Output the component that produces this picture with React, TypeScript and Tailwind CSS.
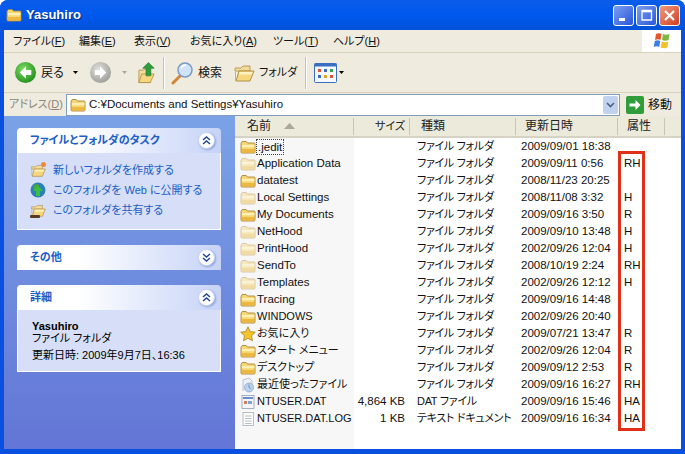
import React from 'react';

const font = 'font-["Liberation_Sans","Noto_Sans_CJK_JP",sans-serif] [font-feature-settings:"palt"]';

const Key: React.FC<{ label: string; k: string; className?: string }> = ({ label, k, className = '' }) => (
  <span className={`whitespace-nowrap ${className}`}>
    {label}(<span className="underline">{k}</span>)
  </span>
);

const Folder: React.FC<{ faded?: boolean; className?: string }> = ({ faded, className = 'w-[16px] h-[14px]' }) => (
  <svg viewBox="0 0 16 14" className={`shrink-0 ${className} ${faded ? 'opacity-45' : ''}`}>
    <path d="M1 3.500 2.200 1.500h4L7.500 3H14a1 1 0 0 1 1 1v8a1 1 0 0 1-1 1H2a1 1 0 0 1-1-1z" fill="#f7d774" stroke="#a9853a" strokeWidth="0.9" />
    <path d="M2 5h12.500v2.200H2z" fill="#fdf0b5" />
    <path d="M2 9h12.500v3.400H2z" fill="#ecb83f" />
  </svg>
);

const OpenFolder: React.FC<{ className?: string }> = ({ className = 'w-[22px] h-[20px]' }) => (
  <svg viewBox="0 0 22 20" className={`shrink-0 ${className}`}>
    <path d="M2 5h6l2-2h7v5H2z" fill="#f3dc9b" stroke="#a98a42" strokeWidth="0.8" />
    <path d="M2 5h1v13l-1-1z" fill="#d8b565" />
    <path d="M3 18 6 8h15l-4 10z" fill="#f6d77f" stroke="#a98a42" strokeWidth="0.9" />
    <path d="M6.600 9h13l-1 2.500H6z" fill="#fdf2c2" />
  </svg>
);

const Chevrons: React.FC<{ down?: boolean }> = ({ down }) => (
  <div className="w-[17px] h-[17px] rounded-full bg-white border border-[#c6d3f7] shadow-[1px_1px_2px_#8b9fd8] flex items-center justify-center">
    <svg viewBox="0 0 9 9" className="w-[9px] h-[9px]">
      <path
        d={down ? 'M1 1l3.500 3L8 1M1 5l3.500 3L8 5' : 'M1 4l3.500-3L8 4M1 8l3.500-3L8 8'}
        fill="none"
        stroke="#1c4596"
        strokeWidth="1.400"
      />
    </svg>
  </div>
);

const CardHeader: React.FC<{ title: string; down?: boolean }> = ({ title, down }) => (
  <div className="h-[25px] rounded-t-[4px] bg-gradient-to-r from-white from-30% to-[#c6d3f7] flex items-center justify-between pl-[13px] pr-[6px]">
    <span className="text-[11px] font-bold text-[#215dc6]">{title}</span>
    <Chevrons down={down} />
  </div>
);

const TaskLink: React.FC<{ icon: React.ReactNode; children: React.ReactNode }> = ({ icon, children }) => (
  <div className="h-[20px] flex items-center gap-[7px] text-[11px] text-[#215dc6] whitespace-nowrap">
    <div className="w-[16px] h-[16px] flex items-center justify-center">{icon}</div>
    <span>{children}</span>
  </div>
);

const WinButton: React.FC<{ bg: string; children: React.ReactNode }> = ({ bg, children }) => (
  <div className={`w-[21px] h-[21px] rounded-[3px] border border-white flex items-center justify-center ${bg}`}>
    <svg viewBox="0 0 13 13" className="w-[13px] h-[13px]">{children}</svg>
  </div>
);

const Arrow: React.FC<{ className?: string }> = ({ className = '' }) => (
  <svg viewBox="0 0 5 3" className={`w-[5px] h-[3px] ${className}`}>
    <path d="M0 0h5L2.500 3z" fill="currentColor" />
  </svg>
);

const NavCircle: React.FC<{ back?: boolean; gray?: boolean }> = ({ back, gray }) => (
  <svg viewBox="0 0 24 24" className="w-[23px] h-[23px]">
    <defs>
      <radialGradient id={gray ? 'navg' : 'navc'} cx="40%" cy="35%" r="70%">
        <stop offset="0" stopColor={gray ? '#e2e0da' : '#7fdc62'} />
        <stop offset="1" stopColor={gray ? '#9c9c96' : '#1e8f1c'} />
      </radialGradient>
    </defs>
    <circle cx="12" cy="12" r="11" fill={`url(#${gray ? 'navg' : 'navc'})`} />
    <path
      d={back ? 'M12.500 5.500 6 12l6.500 6.500v-4H18v-5h-5.500z' : 'M11.500 5.500 18 12l-6.500 6.500v-4H6v-5h5.500z'}
      fill="#fff"
    />
  </svg>
);

type Kind = 'folder' | 'faded' | 'star' | 'recent' | 'dat' | 'log';

const rows: { name: string; kind: Kind; size?: string; type: string; date: string; attr?: string; small?: boolean }[] = [
  { name: '.jedit', kind: 'folder', type: 'ファイル フォルダ', date: '2009/09/01 18:38' },
  { name: 'Application Data', kind: 'faded', type: 'ファイル フォルダ', date: '2009/09/11 0:56', attr: 'RH' },
  { name: 'datatest', kind: 'folder', type: 'ファイル フォルダ', date: '2008/11/23 20:25' },
  { name: 'Local Settings', kind: 'faded', type: 'ファイル フォルダ', date: '2008/11/08 3:32', attr: 'H' },
  { name: 'My Documents', kind: 'folder', type: 'ファイル フォルダ', date: '2009/09/16 3:50', attr: 'R' },
  { name: 'NetHood', kind: 'faded', type: 'ファイル フォルダ', date: '2009/09/10 13:48', attr: 'H' },
  { name: 'PrintHood', kind: 'faded', type: 'ファイル フォルダ', date: '2002/09/26 12:04', attr: 'H' },
  { name: 'SendTo', kind: 'faded', type: 'ファイル フォルダ', date: '2008/10/19 2:24', attr: 'RH' },
  { name: 'Templates', kind: 'faded', type: 'ファイル フォルダ', date: '2002/09/26 12:12', attr: 'H' },
  { name: 'Tracing', kind: 'folder', type: 'ファイル フォルダ', date: '2009/09/16 14:48' },
  { name: 'WINDOWS', kind: 'folder', type: 'ファイル フォルダ', date: '2002/09/26 20:40', small: true },
  { name: 'お気に入り', kind: 'star', type: 'ファイル フォルダ', date: '2009/07/21 13:47', attr: 'R', small: true },
  { name: 'スタート メニュー', kind: 'folder', type: 'ファイル フォルダ', date: '2002/09/26 12:04', attr: 'R', small: true },
  { name: 'デスクトップ', kind: 'folder', type: 'ファイル フォルダ', date: '2009/09/12 2:53', attr: 'R', small: true },
  { name: '最近使ったファイル', kind: 'recent', type: 'ファイル フォルダ', date: '2009/09/16 16:27', attr: 'RH', small: true },
  { name: 'NTUSER.DAT', kind: 'dat', size: '4,864 KB', type: 'DAT ファイル', date: '2009/09/16 15:46', attr: 'HA', small: true },
  { name: 'NTUSER.DAT.LOG', kind: 'log', size: '1 KB', type: 'テキスト ドキュメント', date: '2009/09/16 16:34', attr: 'HA', small: true },
];

const RowIcon: React.FC<{ kind: Kind }> = ({ kind }) => {
  if (kind === 'folder') return <Folder />;
  if (kind === 'faded') return <Folder faded />;
  if (kind === 'star')
    return (
      <svg viewBox="0 0 16 16" className="w-[16px] h-[16px] shrink-0">
        <path d="M8 .8l2.200 4.800 5.100.6-3.800 3.500 1 5.100L8 12.300l-4.500 2.500 1-5.100L.7 6.200l5.100-.6z" fill="#f5c52c" stroke="#a9802a" strokeWidth="0.8" />
      </svg>
    );
  if (kind === 'recent')
    return (
      <svg viewBox="0 0 16 16" className="w-[16px] h-[16px] shrink-0">
        <path d="M3 14V3l6-2 3 3v4" fill="#eef2f8" stroke="#a8b4c8" strokeWidth="0.8" />
        <circle cx="9" cy="10.500" r="4.500" fill="#bcd3ee" stroke="#8aa5c8" strokeWidth="0.8" />
        <path d="M9 10.500V7.500M9 10.500l2 1" stroke="#5a7fb0" strokeWidth="0.8" />
      </svg>
    );
  if (kind === 'dat')
    return (
      <svg viewBox="0 0 16 16" className="w-[16px] h-[16px] shrink-0">
        <rect x="2" y="1.500" width="12" height="13" fill="#f4f6fb" stroke="#8f9db5" strokeWidth="0.8" />
        <rect x="3" y="3" width="10" height="2" fill="#6d8fc8" />
        <rect x="4" y="7" width="3" height="3" fill="#d97a5c" />
        <rect x="8" y="7" width="4" height="3" fill="#7aa5d9" />
      </svg>
    );
  return (
    <svg viewBox="0 0 16 16" className="w-[16px] h-[16px] shrink-0">
      <rect x="3" y="1.500" width="10.500" height="13" fill="#fbfbf8" stroke="#a8b0bc" strokeWidth="0.8" />
      <path d="M5 5h6.500M5 7.500h6.500M5 10h6.500M5 12.500h6.500" stroke="#a8b0bc" strokeWidth="0.8" />
    </svg>
  );
};

const Sep: React.FC<{ className?: string }> = ({ className = '' }) => (
  <div className={`w-[2px] h-[32px] border-l border-r border-l-[#c7c3b2] border-r-white ${className}`} />
);

const columns = 'grid grid-cols-[119px_56px_106px_102px_47px_minmax(0,1fr)]';

export default function App() {
  return (
    <div className={`w-[685px] h-[454px] overflow-hidden flex flex-col rounded-t-[8px] bg-[#0a50e0] ${font}`}>
      {/* title bar */}
      <div className="h-[30px] shrink-0 flex items-center justify-between pl-[6px] pr-[5px] bg-gradient-to-b from-[#0a5ce8] via-[#0058ee] to-[#0352d8]">
        <div className="flex items-center gap-[4px]">
          <Folder />
          <span className="text-white font-bold text-[13px] [text-shadow:1px_1px_1px_#0a2a80]">Yasuhiro</span>
        </div>
        <div className="flex gap-[2px]">
          <WinButton bg="bg-gradient-to-br from-[#7c9df0] to-[#2a55d8]">
            <rect x="2" y="9" width="6" height="3" fill="#fff" />
          </WinButton>
          <WinButton bg="bg-gradient-to-br from-[#7c9df0] to-[#2a55d8]">
            <path d="M2 1.500h9.500V11H2z" fill="none" stroke="#fff" strokeWidth="1.300" />
            <rect x="2" y="1" width="9.500" height="2.300" fill="#fff" />
          </WinButton>
          <WinButton bg="bg-gradient-to-br from-[#ee9a80] to-[#d03a18]">
            <path d="M2 2l9 9M11 2l-9 9" stroke="#fff" strokeWidth="2.200" />
          </WinButton>
        </div>
      </div>

      <div className="flex-1 min-h-0 mx-[4px] mb-[5px] flex flex-col bg-white">
        {/* menu bar */}
        <div className="h-[23px] shrink-0 flex border-b border-[#d8d2bd] bg-[#efebde] text-[11px] text-[#111]">
          <div className="flex-1 flex items-center pl-[9px]">
            <Key label="ファイル" k="F" className="w-[66px]" />
            <Key label="編集" k="E" className="w-[55px]" />
            <Key label="表示" k="V" className="w-[56px]" />
            <Key label="お気に入り" k="A" className="w-[83px]" />
            <Key label="ツール" k="T" className="w-[60px]" />
            <Key label="ヘルプ" k="H" />
          </div>
          <div className="w-[39px] bg-white flex items-center justify-center">
            <svg viewBox="0 0 20 18" className="w-[20px] h-[18px]">
              <path d="M4 2q3-1.500 5.500 0L8.500 8Q6 6.500 3 8z" fill="#e5562a" />
              <path d="M11 2q3 1.500 6.500 0l-1 6q-3 1.500-6.500 0z" fill="#7db83a" />
              <path d="M2.800 9q2.700-1.500 5.400 0l-1 6Q4.500 13.500 1.800 15z" fill="#3f7ee0" />
              <path d="M9.700 9.500q3 1.500 6.600 0l-1 6q-3 1.500-6.600 0z" fill="#f4c02e" />
            </svg>
          </div>
        </div>

        {/* toolbar */}
        <div className="h-[40px] shrink-0 flex items-center pl-[10px] bg-[#efebde] border-b border-[#d8d2bd] text-[12px] text-[#111]">
          <NavCircle back />
          <span className="ml-[4px] w-[22px] whitespace-nowrap">戻る</span>
          <Arrow className="ml-[10px] text-black" />
          <div className="ml-[11px]"><NavCircle gray /></div>
          <Arrow className="ml-[10px] text-[#a9a69a]" />
          <svg viewBox="0 0 22 24" className="ml-[9px] w-[21px] h-[24px]">
            <path d="M3 9h5l1-1h6v14H3z" fill="#f3dc9b" stroke="#a98a42" strokeWidth="0.8" />
            <path d="M3 22l3-9h13l-4 9z" fill="#f6d77f" stroke="#a98a42" strokeWidth="0.8" />
            <path d="M13 1l6 6h-3.500v8h-5V7H7z" fill="#2f9e3a" stroke="#1c6e26" strokeWidth="0.6" />
          </svg>
          <Sep className="ml-[6px]" />
          <svg viewBox="0 0 24 24" className="ml-[5px] w-[24px] h-[24px]">
            <path d="M11 14 3 22" stroke="#d0853a" strokeWidth="3" strokeLinecap="round" />
            <circle cx="15" cy="9" r="7" fill="#cfe4fb" stroke="#7c99c4" strokeWidth="1.500" />
            <path d="M11 7q2-3 5-3" stroke="#fff" strokeWidth="1.500" fill="none" />
          </svg>
          <span className="ml-[4px] w-[24px] whitespace-nowrap">検索</span>
          <div className="ml-[11px]"><OpenFolder /></div>
          <span className="ml-[4px] w-[37px] whitespace-nowrap text-[11px]">フォルダ</span>
          <Sep className="ml-[9px]" />
          <svg viewBox="0 0 23 20" className="ml-[7px] w-[23px] h-[20px]">
            <rect x="0.500" y="0.500" width="22" height="19" rx="1" fill="#f5f8fd" stroke="#3a6ec0" />
            <rect x="0.500" y="0.500" width="22" height="3" fill="#3a6ec0" />
            <path d="M4 6h3v3H4z" fill="#d9583a" /><path d="M10 6h3v3h-3z" fill="#3a6ec0" /><path d="M16 6h3v3h-3z" fill="#3aa050" />
            <path d="M4 12h3v3H4z" fill="#3a6ec0" /><path d="M10 12h3v3h-3z" fill="#e0a030" /><path d="M16 12h3v3h-3z" fill="#d9583a" />
          </svg>
          <Arrow className="ml-[2px] text-black" />
        </div>

        {/* address bar */}
        <div className="h-[23px] shrink-0 flex items-center bg-[#efebde] text-[11.5px]">
          <span className="ml-[5px] w-[57px] text-[11px] text-[#8a877c] whitespace-nowrap"><Key label="アドレス" k="D" /></span>
          <div className="w-[554px] h-[22px] flex items-center bg-white border border-[#7f9db9] pl-[3px] pr-px">
            <Folder />
            <span className="ml-[3px] flex-1 text-[#111]">C:¥Documents and Settings¥Yasuhiro</span>
            <div className="w-[15px] h-[18px] rounded-[2px] bg-[#c1d2ee] flex items-center justify-center">
              <svg viewBox="0 0 9 6" className="w-[9px] h-[6px]">
                <path d="M1 1l3.500 3.500L8 1" fill="none" stroke="#4d6185" strokeWidth="1.600" />
              </svg>
            </div>
          </div>
          <div className="ml-[6px] w-[18px] h-[18px] rounded-[2px] bg-[#2f9e3a] flex items-center justify-center">
            <svg viewBox="0 0 14 14" className="w-[14px] h-[14px]">
              <path d="M1.500 5.500h6V2l5 5-5 5V8.500h-6z" fill="#fff" />
            </svg>
          </div>
          <span className="ml-[4px] text-[12px] text-[#111]">移動</span>
        </div>

        {/* main */}
        <div className="flex-1 min-h-0 flex">
          {/* task pane */}
          <div className="w-[231px] shrink-0 pl-[13px] pr-[14px] pt-[12px] flex flex-col gap-[15px] bg-gradient-to-b from-[#7ba2e7] to-[#6375d6]">
            <div>
              <CardHeader title="ファイルとフォルダのタスク" />
              <div className="h-[77px] bg-[#d6dff7] border border-t-0 border-white pt-[7px] pl-[12px]">
                <TaskLink
                  icon={
                    <div className="relative">
                      <OpenFolder className="w-[16px] h-[15px]" />
                      <div className="absolute -top-[1px] right-0 w-[5px] h-[5px] rounded-full bg-[#ee8a35]" />
                    </div>
                  }
                >
                  新しいフォルダを作成する
                </TaskLink>
                <TaskLink
                  icon={
                    <svg viewBox="0 0 16 16" className="w-[16px] h-[16px]">
                      <circle cx="8" cy="8" r="7.500" fill="#2c7fb8" />
                      <path d="M3 4q3-3 6-1l-1 4-4 1z" fill="#4aa83a" />
                      <path d="M8 4l5 5h-3v5H6V9H3z" fill="#38c040" />
                    </svg>
                  }
                >
                  このフォルダを Web に公開する
                </TaskLink>
                <TaskLink
                  icon={
                    <div className="relative">
                      <OpenFolder className="w-[16px] h-[15px]" />
                      <div className="absolute bottom-0 left-0 w-[10px] h-[3px] rounded-[1px] bg-[#5a3a20]" />
                    </div>
                  }
                >
                  このフォルダを共有する
                </TaskLink>
              </div>
            </div>
            <CardHeader title="その他" down />
            <div>
              <CardHeader title="詳細" />
              <div className="h-[62px] bg-[#d6dff7] border border-t-0 border-white pt-[10px] pl-[14px] text-[11px] leading-[12px] text-black whitespace-nowrap">
                <div className="font-bold">Yasuhiro</div>
                <div>ファイル フォルダ</div>
                <div className="mt-[5px]">更新日時: 2009年9月7日、16:36</div>
              </div>
            </div>
          </div>

          {/* file list */}
          <div className="flex-1 min-w-0 flex flex-col relative text-[11.5px] text-[#111]">
            <div className={`${columns} h-[22px] shrink-0 items-center bg-[#ebeadb] border-b-[2px] border-[#d6d3c4] text-[12px] text-[#222]`}>
              <div className="pl-[12px] flex items-center gap-[13px] border-r border-[#c7c5b2] h-[17px]">
                <span>名前</span>
                <svg viewBox="0 0 11 6" className="w-[11px] h-[6px]"><path d="M5.500 0 11 6H0z" fill="#aca899" /></svg>
              </div>
              <div className="pr-[4px] text-right border-r border-[#c7c5b2] h-[17px] leading-[17px] text-[11px]">サイズ</div>
              <div className="pl-[11px] border-r border-[#c7c5b2] h-[17px] leading-[17px]">種類</div>
              <div className="pl-[9px] border-r border-[#c7c5b2] h-[17px] leading-[17px]">更新日時</div>
              <div className="pl-[9px] border-r border-[#c7c5b2] h-[17px] leading-[17px]">属性</div>
              <div />
            </div>
            {rows.map((r) => (
              <div key={r.name} className={`${columns} h-[17px] shrink-0 items-center whitespace-nowrap`}>
                <div className={`h-[17px] bg-[#f7f7f7] pl-[5px] flex items-center gap-[1px] ${r.small ? 'text-[11px]' : ''}`}>
                  <RowIcon kind={r.kind} />
                  <span className={r.name === '.jedit' ? 'outline-1 outline-dotted outline-[#444] px-px leading-[14px]' : ''}>{r.name}</span>
                </div>
                <div className="pr-[5px] text-right">{r.size}</div>
                <div className="pl-[7px] text-[11px] tracking-[-0.3px]">{r.type}</div>
                <div className="pl-[5px]">{r.date}</div>
                <div className="pl-[6px]">{r.attr}</div>
                <div />
              </div>
            ))}
            <div className={`${columns} flex-1`}>
              <div className="bg-[#f7f7f7]" />
            </div>
            {/* red annotation box */}
            <div className="absolute left-[383px] top-[35px] w-[27px] h-[280px] border-[3px] border-[#e03015]" />
          </div>
        </div>
      </div>
    </div>
  );
}
